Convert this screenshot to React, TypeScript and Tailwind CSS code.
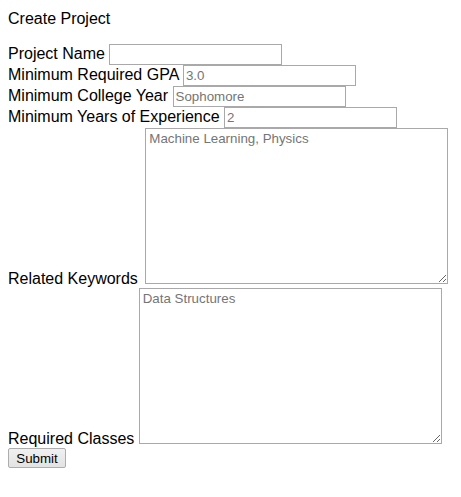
import React from "react"

const inputCls =
  "w-[173px] h-[21px] border border-[#a9a9a9] bg-white px-[2px] py-[1px] text-[13.33px] leading-[normal] text-black placeholder:text-[#757575] font-['Liberation_Sans',Arial,sans-serif] align-baseline outline-none"

const areaCls =
  "w-[303px] h-[156px] border border-[#a9a9a9] bg-white px-[3px] py-[2px] text-[13.33px] leading-[normal] placeholder:text-[#757575] font-['Liberation_Sans',Arial,sans-serif] align-baseline inline-block resize outline-none"

export default function App() {
  return (
    <div className="m-2 text-base leading-[normal] text-black font-['Liberation_Sans',Arial,sans-serif]">
      <div className="pt-[2px] -mb-[2px]">Create Project</div>
      <br />
      <form onSubmit={(e) => e.preventDefault()}>
        <label>
          Project Name <input type="text" className={inputCls} />
        </label>
        <br />
        <label>
          Minimum Required GPA <input type="text" placeholder="3.0" className={inputCls} />
        </label>
        <br />
        <label>
          Minimum College Year <input type="text" placeholder="Sophomore" className={inputCls} />
        </label>
        <br />
        <label>
          Minimum Years of Experience <input type="text" placeholder="2" className={inputCls} />
        </label>
        <br />
        <label>
          Related Keywords <textarea placeholder="Machine Learning, Physics" className={`${areaCls} ml-[3px]`} />
        </label>
        <br />
        <label>
          Required Classes <textarea placeholder="Data Structures" className={areaCls} />
        </label>
        <br />
        <button
          type="submit"
          className="w-[58px] h-[20px] text-[13.33px] leading-[normal] border border-[#adadad] rounded-[2px] bg-gradient-to-b from-[#f0f0f0] to-[#e3e3e3] text-black font-['Liberation_Sans',Arial,sans-serif]"
        >
          Submit
        </button>
      </form>
    </div>
  )
}
